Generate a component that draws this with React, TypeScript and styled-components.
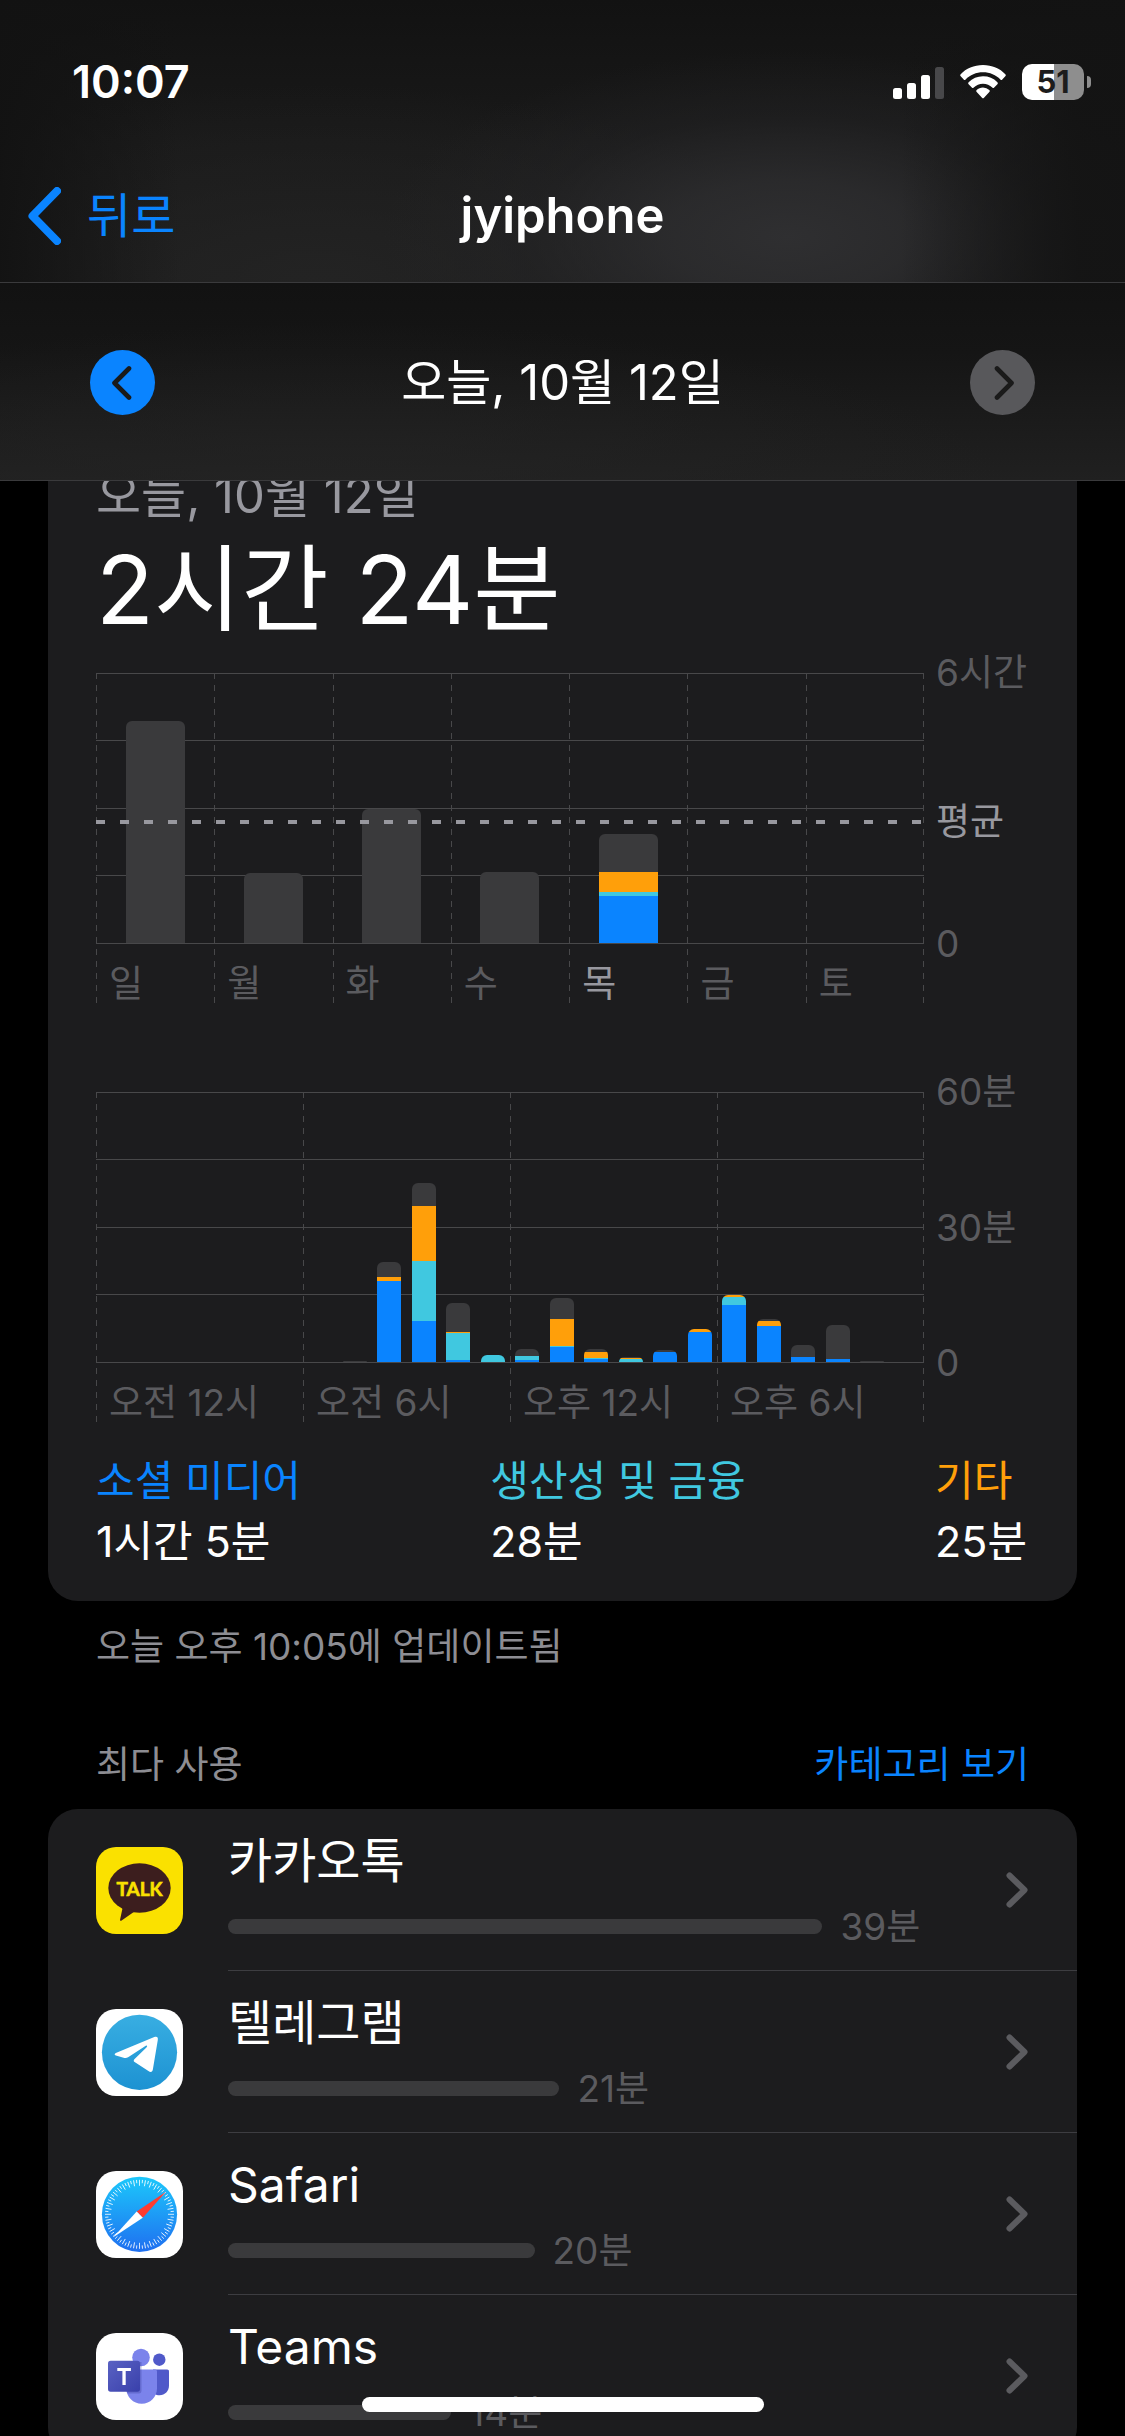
import React from "react";
import styled, { createGlobalStyle } from "styled-components";

const color = {
  blue: "#0a84ff",
  cyan: "#40c8e0",
  orange: "#ff9f0a",
  fill: "#3a3a3c",
  line: "#48484a",
  card: "#1c1c1e",
  separator: "#3d3d41",
  tertiary: "#5b5b5f",
  secondary: "#98989f",
  footnote: "#8d8d93",
};

const PLOT_HEIGHT = 270;

const GlobalStyle = createGlobalStyle`
  * { box-sizing: border-box; }
  html, body { margin: 0; background: #000; }
  body {
    font-family: Inter, "Noto Sans CJK KR", sans-serif;
    color: #fff;
  }
  a { color: inherit; text-decoration: none; }
  button { padding: 0; border: 0; background: none; font: inherit; color: inherit; cursor: pointer; }
  h1, h2, p, ul, dl, dt, dd { margin: 0; padding: 0; font: inherit; }
  ul { list-style: none; }
  svg { display: block; flex: none; }
`;

const Screen = styled.div`
  position: relative;
  height: 100vh;
  overflow: hidden;
`;

/* ---------- header ---------- */

const Header = styled.header`
  position: absolute;
  z-index: 1;
  top: 0;
  left: 0;
  right: 0;
`;

const TopBar = styled.div`
  border-bottom: 1px solid #3a3a3c;
  background:
    linear-gradient(to right, rgba(18, 18, 18, 0.9), transparent 16%, transparent 80%, rgba(19, 19, 19, 0.85) 96%),
    radial-gradient(ellipse 36% 66% at 70% 84%, rgba(48, 48, 50, 0.95), rgba(46, 46, 48, 0.8) 30%, rgba(38, 38, 40, 0.4) 65%, transparent),
    radial-gradient(ellipse 45% 70% at 28% 100%, rgba(36, 36, 36, 0.9), transparent),
    linear-gradient(#121212, #191919 50%, #1c1c1c);
`;

const StatusBar = styled.div`
  display: flex;
  align-items: center;
  justify-content: space-between;
  height: 150px;
  padding: 14px 34px 0 72px;
`;

const Clock = styled.time`
  font-size: 45px;
  line-height: 60px;
  font-weight: 600;
`;

const StatusIcons = styled.div`
  display: flex;
  align-items: center;
  gap: 16px;
`;

const NavBar = styled.nav`
  display: grid;
  grid-template-columns: 1fr auto 1fr;
  align-items: center;
  height: 132px;
  padding: 0 28px;
`;

const BackLink = styled.a`
  display: flex;
  align-items: center;
  gap: 26px;
  color: ${color.blue};
  font-size: 48px;
  line-height: 60px;
`;

const Title = styled.h1`
  font-size: 49px;
  line-height: 60px;
  font-weight: 600;
`;

const DateBar = styled.div`
  display: flex;
  align-items: center;
  justify-content: space-between;
  height: 198px;
  padding: 2px 90px 0;
  border-bottom: 1px solid #3a3a3c;
  background:
    radial-gradient(ellipse 60% 90% at 30% 110%, rgba(36, 36, 36, 0.8), transparent),
    linear-gradient(#121212, #151515 35%, #202020);
`;

const CurrentDate = styled.p`
  font-size: 49px;
  line-height: 60px;
`;

const RoundButton = styled.button<{ $tint: string }>`
  display: grid;
  place-items: center;
  width: 65px;
  height: 65px;
  border-radius: 50%;
  background: ${(p) => p.$tint};
  color: #1a1a1a;
`;

/* ---------- content ---------- */

const Main = styled.main`
  padding: 400px 48px 0;
`;

const Card = styled.section`
  border-radius: 30px;
  background: ${color.card};
`;

const SummaryCard = styled(Card)`
  padding: 66px 50px 30px 48px;
`;

const CardDate = styled.p`
  color: ${color.secondary};
  font-size: 49px;
  line-height: 60px;
`;

const Total = styled.p`
  margin-top: 8px;
  font-size: 95px;
  line-height: 112px;
`;

const Chart = styled.div<{ $gap: number }>`
  position: relative;
  display: grid;
  grid-template-columns: 1fr 91px;
  column-gap: 12px;
  margin-top: ${(p) => p.$gap}px;
  font-size: 37px;
  line-height: 40px;
  color: ${color.tertiary};
  white-space: nowrap;
`;

const dashes = `repeating-linear-gradient(${color.line} 0 6px, transparent 6px 12px)`;
const solid = `linear-gradient(${color.line}, ${color.line})`;

const Plot = styled.div<{ $sections: number }>`
  display: grid;
  grid-template-columns: repeat(${(p) => p.$sections}, 1fr);
  height: 330px;
  background:
    ${solid} 0 0 / 100% 1px no-repeat,
    ${solid} 0 67px / 100% 1px no-repeat,
    ${solid} 0 135px / 100% 1px no-repeat,
    ${solid} 0 202px / 100% 1px no-repeat,
    ${solid} 0 270px / 100% 1px no-repeat,
    ${dashes} 100% 0 / 1px 100% no-repeat;
`;

const Section = styled.div`
  background: ${dashes} 0 0 / 1px 100% no-repeat;
`;

const Bars = styled.div`
  display: flex;
  align-items: flex-end;
  height: ${PLOT_HEIGHT}px;
`;

const Slot = styled.div`
  display: flex;
  justify-content: center;
  flex: 1;
`;

const Stack = styled.div<{ $width: number }>`
  display: flex;
  flex-direction: column-reverse;
  width: ${(p) => p.$width}px;
  border-radius: 6px 6px 0 0;
  overflow: hidden;
`;

const Segment = styled.div<{ $color: string }>`
  background: ${(p) => p.$color};
`;

const SectionLabel = styled.div<{ $active?: boolean }>`
  padding: 21px 0 0 13px;
  color: ${(p) => (p.$active ? color.secondary : "inherit")};
`;

const Axis = styled.div`
  display: flex;
  flex-direction: column;
  justify-content: space-between;
  height: 311px;
  margin-top: -20px;
`;

const Average = styled.div`
  position: absolute;
  left: 0;
  right: 0;
  display: grid;
  grid-template-columns: 1fr 91px;
  column-gap: 12px;
  align-items: center;
  height: 40px;
  margin-top: -20px;
  color: ${color.secondary};
`;

const AverageLine = styled.div`
  height: 4px;
  background: repeating-linear-gradient(to right, ${color.secondary} 0 9px, transparent 9px 24px);
`;

const Legend = styled.dl`
  display: flex;
  justify-content: space-between;
  margin-top: 29px;
  font-size: 42px;
  line-height: 60px;
`;

const LegendName = styled.dt<{ $color: string }>`
  color: ${(p) => p.$color};
`;

const LegendTime = styled.dd`
  font-size: 43px;
`;

const Updated = styled.p`
  margin: 24px 48px 0;
  color: ${color.footnote};
  font-size: 37px;
  line-height: 44px;
`;

const ListHeader = styled.div`
  display: flex;
  justify-content: space-between;
  margin: 74px 48px 22px;
  color: ${color.footnote};
  font-size: 37px;
  line-height: 44px;
`;

const TextButton = styled.button`
  color: ${color.blue};
`;

const AppLink = styled.a`
  display: flex;
  align-items: center;
  gap: 45px;
  padding-left: 48px;
`;

const AppBody = styled.div`
  display: flex;
  align-items: center;
  flex: 1;
  height: 162px;
  padding-right: 49px;
  border-bottom: 1px solid ${color.separator};
`;

const AppInfo = styled.div`
  flex: 1;
`;

const AppName = styled.div`
  font-size: 48px;
  line-height: 60px;
`;

const Usage = styled.div`
  display: flex;
  align-items: center;
  gap: 18px;
  margin-top: 14px;
  color: ${color.tertiary};
  font-size: 37px;
  line-height: 44px;
`;

const UsageBar = styled.div`
  height: 15px;
  border-radius: 8px;
  background: ${color.fill};
`;

const HomeIndicator = styled.div`
  position: absolute;
  z-index: 1;
  bottom: 24px;
  left: 50%;
  width: 402px;
  height: 15px;
  margin-left: -201px;
  border-radius: 8px;
  background: #fff;
`;

const BatteryBox = styled.div`
  display: flex;
  align-items: center;
  gap: 3px;
`;

const BatteryBody = styled.div`
  width: 62px;
  height: 36px;
  border-radius: 10px;
  background: linear-gradient(to right, #fff 51%, #8e8e8e 51%);
  color: #1c1c1c;
  font-size: 31px;
  line-height: 36px;
  font-weight: 700;
  text-align: center;
`;

const BatteryTip = styled.div`
  width: 4px;
  height: 12px;
  border-radius: 0 4px 4px 0;
  background: #8e8e8e;
`;

/* ---------- icons ---------- */

const BackChevron = () => (
  <svg width="33" height="58" viewBox="0 0 33 58" fill="none">
    <path d="M29 4 4.500 29 29 54" stroke="currentColor" strokeWidth="8" strokeLinecap="round" strokeLinejoin="round" />
  </svg>
);

const CircleChevron = ({ next }: { next?: boolean }) => (
  <svg width="24" height="34" viewBox="0 0 24 34" fill="none">
    <path
      d={next ? "M6 2.500 20.500 17 6 31.500" : "M18 2.500 3.500 17 18 31.500"}
      stroke="currentColor"
      strokeWidth="4.600"
      strokeLinecap="round"
      strokeLinejoin="round"
    />
  </svg>
);

const RowChevron = () => (
  <svg width="22" height="36" viewBox="0 0 22 36" fill="none">
    <path d="M3.500 3.500 18.500 18 3.500 32.500" stroke={color.tertiary} strokeWidth="6" strokeLinecap="round" strokeLinejoin="round" />
  </svg>
);

const Signal = () => (
  <svg width="51" height="33" viewBox="0 0 51 33" fill="#fff">
    <rect x="0" y="22" width="9" height="11" rx="2.500" />
    <rect x="14" y="17" width="9" height="16" rx="2.500" />
    <rect x="28" y="9" width="9" height="24" rx="2.500" />
    <rect x="42" y="1" width="9" height="32" rx="2.500" fill="#48484a" />
  </svg>
);

const Wifi = () => (
  <svg width="46" height="34" viewBox="0 0 46 34" fill="#fff">
    <path d="M23 0C14 0 6 3.500 .7 9.200a1.400 1.400 0 0 0 0 2l3 3.200a1.300 1.300 0 0 0 1.900 0C10 9.900 16.200 7.200 23 7.200s13 2.700 17.400 7.200a1.300 1.300 0 0 0 1.900 0l3-3.200a1.400 1.400 0 0 0 0-2C40 3.500 32 0 23 0Z" />
    <path d="M23 11.300c-5.600 0-10.700 2.200-14.400 5.900a1.400 1.400 0 0 0 0 2l3.200 3.300a1.300 1.300 0 0 0 1.900 0 13.300 13.300 0 0 1 18.600 0 1.300 1.300 0 0 0 1.900 0l3.200-3.300a1.400 1.400 0 0 0 0-2A20.300 20.300 0 0 0 23 11.300Z" />
    <path d="M23 22.500c-2.500 0-4.700 1-6.300 2.500a1.300 1.300 0 0 0 0 2l5.300 5.700a1.400 1.400 0 0 0 2 0l5.300-5.700a1.300 1.300 0 0 0 0-2A9.200 9.200 0 0 0 23 22.500Z" />
  </svg>
);

const KakaoIcon = () => (
  <svg width="87" height="87" viewBox="0 0 87 87">
    <rect width="87" height="87" rx="20" fill="#fae100" />
    <ellipse cx="43.500" cy="41" rx="31.200" ry="24.700" fill="#3c1e1e" />
    <path d="M27 59 24.100 72.500c-.3 1.200.6 1.700 1.500 1L38.500 64.500Z" fill="#3c1e1e" />
    <text x="43.500" y="48.500" textAnchor="middle" fontFamily="Lato, sans-serif" fontWeight="700" fontSize="19" fill="#fae100" stroke="#fae100" strokeWidth=".6">
      TALK
    </text>
  </svg>
);

const TelegramIcon = () => (
  <svg width="87" height="87" viewBox="0 0 87 87">
    <defs>
      <linearGradient id="telegram" x1="0" y1="0" x2="0" y2="1">
        <stop offset="0" stopColor="#38aee2" />
        <stop offset="1" stopColor="#1d92d2" />
      </linearGradient>
    </defs>
    <rect width="87" height="87" rx="20" fill="#fff" />
    <circle cx="43.500" cy="43.300" r="37.600" fill="url(#telegram)" />
    <path
      d="M19.800 43.900 58.300 28.100c2.700-1 3.900.1 3.500 2.900l-4.900 29.300c-.5 2.900-2.200 3.200-4.500 1.700L38.600 53c-1.200-.9-1.100-2 0-3.100L50.400 38.600c1.600-1.700.4-2.700-1.400-1.400L32.500 48c-1.500 1-3 1.300-4.900.8l-7.700-2.300c-1.600-.5-1.700-1.900-.1-2.600Z"
      fill="#fff"
    />
  </svg>
);

const SafariIcon = () => (
  <svg width="87" height="87" viewBox="0 0 87 87">
    <defs>
      <linearGradient id="safari" x1="0" y1="0" x2="0" y2="1">
        <stop offset="0" stopColor="#1cc8fb" />
        <stop offset="1" stopColor="#1f6ff0" />
      </linearGradient>
    </defs>
    <rect width="87" height="87" rx="20" fill="#fff" />
    <circle cx="43.500" cy="43.300" r="37.600" fill="url(#safari)" />
    {Array.from({ length: 72 }, (_, i) => (
      <path
        key={i}
        d={i % 2 ? "M43.500 8.800v3.300" : "M43.500 8.800v6"}
        stroke="#fff"
        strokeWidth=".8"
        transform={`rotate(${i * 5} 43.500 43.300)`}
      />
    ))}
    <path d="M70 20.700 40.700 40.400 46.800 46.700Z" fill="#ff3b30" />
    <path d="M17.300 66.300 40.700 40.400 46.800 46.700Z" fill="#fff" />
  </svg>
);

const TeamsIcon = () => (
  <svg width="87" height="87" viewBox="0 0 87 87">
    <defs>
      <linearGradient id="teams" x1="0" y1="0" x2="1" y2="1">
        <stop offset="0" stopColor="#5a62c3" />
        <stop offset="1" stopColor="#3940ab" />
      </linearGradient>
    </defs>
    <rect width="87" height="87" rx="20" fill="#fff" />
    <circle cx="63.300" cy="26.700" r="6.200" fill="#5059c9" />
    <path d="M57 36.500h14.200c1 0 1.800.8 1.800 1.800V52.500c0 5.500-4 9.700-9.500 9.700-4 0-6.500-2-6.500-2Z" fill="#5059c9" />
    <circle cx="45" cy="24.500" r="8.800" fill="#7b83eb" />
    <path d="M30.300 36.500h28.700c1.100 0 2 .9 2 2V55.200c0 8.700-6.800 15.500-15.300 15.500S30.300 63.900 30.300 55.200Z" fill="#7b83eb" />
    <path d="M30.300 29h15.200v28.500c0 1.700-1 3-2.700 3H31.200c-.6-1.700-.9-3-.9-5Z" fill="#2f3590" opacity=".3" />
    <rect x="12" y="27.700" width="32" height="31" rx="2.600" fill="url(#teams)" />
    <path d="M21.300 35h13.600v3.100H29.700V52h-3.300V38.100h-5.100Z" fill="#fff" />
  </svg>
);

/* ---------- data ---------- */

type Slice = [string, number];

const { blue, cyan, orange, fill } = color;

const week: { label: string; slices: Slice[]; active?: boolean }[] = [
  { label: "일", slices: [[fill, 296]] },
  { label: "월", slices: [[fill, 93]] },
  { label: "화", slices: [[fill, 179]] },
  { label: "수", slices: [[fill, 95]] },
  { label: "목", slices: [[blue, 63], [cyan, 5], [orange, 27], [fill, 50]], active: true },
  { label: "금", slices: [] },
  { label: "토", slices: [] },
];

const averageMinutes = 162;

/* seconds of use in each hour of the day */
const hours: Slice[][] = [
  [], [], [], [], [], [], [],
  [[fill, 13]],
  [[blue, 1080], [orange, 53], [fill, 200]],
  [[blue, 547], [cyan, 800], [orange, 733], [fill, 307]],
  [[blue, 27], [cyan, 360], [orange, 13], [fill, 387]],
  [[cyan, 93]],
  [[blue, 27], [cyan, 53], [fill, 93]],
  [[blue, 200], [cyan, 13], [orange, 360], [fill, 280]],
  [[blue, 40], [cyan, 13], [orange, 80], [fill, 40]],
  [[cyan, 40], [orange, 13], [fill, 13]],
  [[blue, 133], [fill, 27]],
  [[blue, 400], [orange, 40]],
  [[blue, 760], [cyan, 107], [orange, 27]],
  [[blue, 480], [orange, 67], [fill, 27]],
  [[blue, 67], [fill, 160]],
  [[blue, 40], [fill, 453]],
  [[fill, 13]],
  [],
];

const dayParts = ["오전 12시", "오전 6시", "오후 12시", "오후 6시"];

const categories = [
  { name: "소셜 미디어", time: "1시간 5분", tint: blue },
  { name: "생산성 및 금융", time: "28분", tint: cyan },
  { name: "기타", time: "25분", tint: orange },
];

const apps = [
  { name: "카카오톡", minutes: 39, share: 76.4, Icon: KakaoIcon },
  { name: "텔레그램", minutes: 21, share: 42.6, Icon: TelegramIcon },
  { name: "Safari", minutes: 20, share: 39.4, Icon: SafariIcon },
  { name: "Teams", minutes: 14, share: 28.7, Icon: TeamsIcon },
];

function Bar({ slices, max, width }: { slices: Slice[]; max: number; width: number }) {
  return (
    <Slot>
      <Stack $width={width}>
        {slices.map(([tint, value]) => (
          <Segment key={tint} $color={tint} style={{ height: Math.round((value / max) * PLOT_HEIGHT) }} />
        ))}
      </Stack>
    </Slot>
  );
}

function WeekChart() {
  return (
    <Chart $gap={27}>
      <Plot $sections={7}>
        {week.map((day) => (
          <Section key={day.label}>
            <Bars>
              <Bar slices={day.slices} max={360} width={59} />
            </Bars>
            <SectionLabel $active={day.active}>{day.label}</SectionLabel>
          </Section>
        ))}
      </Plot>
      <Axis>
        <span>6시간</span>
        <span>0</span>
      </Axis>
      <Average style={{ top: Math.round((1 - averageMinutes / 360) * PLOT_HEIGHT) }}>
        <AverageLine />
        <span>평균</span>
      </Average>
    </Chart>
  );
}

function DayChart() {
  return (
    <Chart $gap={89}>
      <Plot $sections={4}>
        {dayParts.map((part, i) => (
          <Section key={part}>
            <Bars>
              {hours.slice(i * 6, i * 6 + 6).map((slices, h) => (
                <Bar key={h} slices={slices} max={3600} width={24} />
              ))}
            </Bars>
            <SectionLabel>{part}</SectionLabel>
          </Section>
        ))}
      </Plot>
      <Axis>
        <span>60분</span>
        <span>30분</span>
        <span>0</span>
      </Axis>
    </Chart>
  );
}

export default function App() {
  return (
    <Screen>
      <GlobalStyle />
      <Header>
        <TopBar>
          <StatusBar>
            <Clock>10:07</Clock>
            <StatusIcons>
              <Signal />
              <Wifi />
              <BatteryBox>
                <BatteryBody>51</BatteryBody>
                <BatteryTip />
              </BatteryBox>
            </StatusIcons>
          </StatusBar>
          <NavBar>
            <BackLink href="#back">
              <BackChevron />
              뒤로
            </BackLink>
            <Title>jyiphone</Title>
          </NavBar>
        </TopBar>
        <DateBar>
          <RoundButton $tint={color.blue} aria-label="이전 날">
            <CircleChevron />
          </RoundButton>
          <CurrentDate>오늘, 10월 12일</CurrentDate>
          <RoundButton $tint="#58585b" aria-label="다음 날" disabled>
            <CircleChevron next />
          </RoundButton>
        </DateBar>
      </Header>

      <Main>
        <SummaryCard>
          <CardDate>오늘, 10월 12일</CardDate>
          <Total>2시간 24분</Total>
          <WeekChart />
          <DayChart />
          <Legend>
            {categories.map((c) => (
              <div key={c.name}>
                <LegendName $color={c.tint}>{c.name}</LegendName>
                <LegendTime>{c.time}</LegendTime>
              </div>
            ))}
          </Legend>
        </SummaryCard>
        <Updated>오늘 오후 10:05에 업데이트됨</Updated>

        <ListHeader>
          <h2>최다 사용</h2>
          <TextButton>카테고리 보기</TextButton>
        </ListHeader>
        <Card>
          <ul>
            {apps.map(({ name, minutes, share, Icon }) => (
              <li key={name}>
                <AppLink href={`#${name}`}>
                  <Icon />
                  <AppBody>
                    <AppInfo>
                      <AppName>{name}</AppName>
                      <Usage>
                        <UsageBar style={{ width: `${share}%` }} />
                        <span>{minutes}분</span>
                      </Usage>
                    </AppInfo>
                    <RowChevron />
                  </AppBody>
                </AppLink>
              </li>
            ))}
          </ul>
        </Card>
      </Main>
      <HomeIndicator />
    </Screen>
  );
}
